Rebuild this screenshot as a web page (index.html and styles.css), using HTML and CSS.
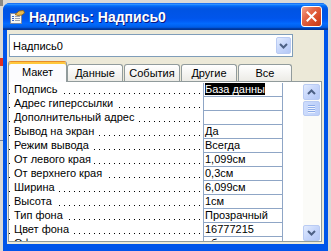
FILE: index.html
```html
<!DOCTYPE html>
<html lang="ru">
<head>
  <meta charset="UTF-8" />
  <title>Надпись: Надпись0</title>
  <link rel="stylesheet" href="styles.css">
</head>
<body>
  <div class="backdrop"></div>
  <div class="window">
    <div class="titlebar">
      <svg class="title-icon" width="16" height="16" viewBox="0 0 16 16">
        <rect x="1.5" y="4.5" width="11" height="10" fill="#f6f6f2" stroke="#7c8aa4"/>
        <rect x="3" y="7" width="2" height="1" fill="#3a66c4"/>
        <rect x="6" y="7" width="5" height="1" fill="#9aa3b4"/>
        <rect x="3" y="9" width="2" height="1" fill="#3a66c4"/>
        <rect x="6" y="9" width="5" height="1" fill="#9aa3b4"/>
        <rect x="3" y="11" width="2" height="1" fill="#3a66c4"/>
        <rect x="6" y="11" width="5" height="1" fill="#9aa3b4"/>
        <path d="M6 5.5 L10 2 L14.5 1.5 L15.5 4 L13 6 L9 6.5 Z" fill="#e9bb4e" stroke="#8a5c12" stroke-width="0.8"/>
      </svg>
      <span class="title">Надпись: Надпись0</span>
      <span class="close">
        <svg width="11" height="11" viewBox="0 0 11 11">
          <path d="M1.5 1.5 L9.5 9.5 M9.5 1.5 L1.5 9.5" stroke="#fff" stroke-width="2" stroke-linecap="square"/>
        </svg>
      </span>
    </div>

    <div class="client">
      <div class="combo">
        <span class="combo-text">Надпись0</span>
        <span class="combo-btn">
          <svg width="9" height="6" viewBox="0 0 9 6"><path d="M1 1 L4.5 4.5 L8 1" fill="none" stroke="#4d6185" stroke-width="2"/></svg>
        </span>
      </div>

      <div class="tabs">
        <div class="tab active">Макет</div>
        <div class="tab">Данные</div>
        <div class="tab">События</div>
        <div class="tab">Другие</div>
        <div class="tab">Все</div>
      </div>

      <div class="panel">
        <div class="grid">
          <div class="row"><div class="label"><span class="name">Подпись</span></div><div class="value"><span class="sel">База данны</span></div></div>
          <div class="row"><div class="label"><span class="name">Адрес гиперссылки</span></div><div class="value"></div></div>
          <div class="row"><div class="label"><span class="name">Дополнительный адрес</span></div><div class="value"></div></div>
          <div class="row"><div class="label"><span class="name">Вывод на экран</span></div><div class="value">Да</div></div>
          <div class="row"><div class="label"><span class="name">Режим вывода</span></div><div class="value">Всегда</div></div>
          <div class="row"><div class="label"><span class="name">От левого края</span></div><div class="value">1,099см</div></div>
          <div class="row"><div class="label"><span class="name">От верхнего края</span></div><div class="value">0,3см</div></div>
          <div class="row"><div class="label"><span class="name">Ширина</span></div><div class="value">6,099см</div></div>
          <div class="row"><div class="label"><span class="name">Высота</span></div><div class="value">1см</div></div>
          <div class="row"><div class="label"><span class="name">Тип фона</span></div><div class="value">Прозрачный</div></div>
          <div class="row"><div class="label"><span class="name">Цвет фона</span></div><div class="value">16777215</div></div>
          <div class="row"><div class="label"><span class="name">Оформление</span></div><div class="value">обычное</div></div>
        </div>
        <div class="scrollbar">
          <div class="sb-btn">
            <svg width="9" height="6" viewBox="0 0 9 6"><path d="M1 5 L4.5 1.5 L8 5" fill="none" stroke="#4d6185" stroke-width="2"/></svg>
          </div>
          <div class="thumb"><span></span><span></span><span></span><span></span></div>
          <div class="sb-btn down">
            <svg width="9" height="6" viewBox="0 0 9 6"><path d="M1 1 L4.5 4.5 L8 1" fill="none" stroke="#4d6185" stroke-width="2"/></svg>
          </div>
        </div>
      </div>
    </div>
  </div>
</body>
</html>
```

FILE: styles.css
```css
body {
  margin: 0;
  background: #d9d9d6;
  font-family: "Liberation Sans", Arial, sans-serif;
  font-size: 11px;
  color: #000;
  display: flex;
  align-items: flex-start;
}

.backdrop {
  width: 3px;
  height: 251px;
  flex-shrink: 0;
  background: linear-gradient(to bottom, #8a8a86 0 6px, #d9d9d6 6px 58px, #e03020 58px 66px, #d9d9d6 66px 140px, #6f7f9c 140px 141px, #d9d9d6 141px);
}

.window {
  margin-top: 3px;
  width: 325px;
  height: 248px;
  flex-shrink: 0;
  background: #0055ea;
  border-radius: 7px 7px 0 0;
  display: flex;
  flex-direction: column;
  overflow: hidden;
}

.titlebar {
  height: 27px;
  flex-shrink: 0;
  display: flex;
  align-items: center;
  padding: 0 6px;
  background: linear-gradient(to bottom, #0058ee 0%, #3593ff 4%, #288eff 6%, #127dff 8%, #036ffc 10%, #0262ee 14%, #0057e5 20%, #0054e3 24%, #0055eb 56%, #005bf5 66%, #026afe 76%, #0062ef 86%, #0052d6 92%, #0040ab 94%, #003092 100%);
}

.title-icon {
  flex-shrink: 0;
}

.title {
  margin-left: 4px;
  color: #fff;
  font-weight: bold;
  font-size: 14px;
  text-shadow: 1px 1px 0 #0a1883;
}

.close {
  margin-left: auto;
  width: 21px;
  height: 21px;
  box-sizing: border-box;
  border: 1px solid #fff;
  border-radius: 3px;
  background: linear-gradient(135deg, #f4a48c 0%, #e4694a 35%, #d84a26 70%, #c23a17 100%);
  display: flex;
  align-items: center;
  justify-content: center;
}

.client {
  flex: 1;
  margin: 0 4px 7px;
  background: #ece9d8;
  display: flex;
  flex-direction: column;
  align-items: flex-start;
}

.combo {
  margin: 4px 0 0 2px;
  width: 284px;
  height: 23px;
  box-sizing: border-box;
  border: 1px solid #7f9db9;
  background: #fff;
  display: flex;
  align-items: center;
}

.combo-text {
  flex: 1;
  padding-left: 3px;
}

.combo-btn,
.sb-btn {
  box-sizing: border-box;
  border: 1px solid #b9cbf3;
  border-radius: 2px;
  background: linear-gradient(135deg, #e2ebfe 0%, #c6d6fb 50%, #b4c8f6 100%);
  display: flex;
  align-items: center;
  justify-content: center;
}

.combo-btn {
  width: 15px;
  height: 17px;
  margin-right: 1px;
}

.tabs {
  display: flex;
  align-items: flex-end;
  height: 20px;
  margin: 4px 0 0 1px;
  position: relative;
  z-index: 1;
}

.tab {
  width: 56px;
  height: 17px;
  margin-right: 1px;
  box-sizing: border-box;
  border: 1px solid #919b9c;
  border-bottom: none;
  border-radius: 3px 3px 0 0;
  background: linear-gradient(#fff, #ecebe6);
  text-align: center;
  line-height: 17px;
}

.tab:last-child {
  width: 54px;
}

.tab.active {
  width: 59px;
  height: 21px;
  margin: 0 0 -1px;
  background: #fcfcfe;
  border-top-color: #e68b2c;
  box-shadow: inset 0 2px 0 #ffc83c;
  line-height: 20px;
}

.panel {
  margin-left: 1px;
  width: 314px;
  height: 161px;
  box-sizing: border-box;
  border: 1px solid #919b9c;
  background: #fff;
  display: flex;
}

.grid {
  flex: 1;
  padding-top: 1px;
  overflow: hidden;
}

.row {
  display: flex;
  height: 14px;
  line-height: 13px;
}

.label {
  width: 194px;
  box-sizing: border-box;
  padding-left: 5px;
  white-space: nowrap;
  background-image: linear-gradient(to right, #000 0 1px, transparent 1px 5px);
  background-size: 5px 1px;
  background-repeat: repeat-x;
  background-position: 0 10px;
}

.name {
  background: #fff;
  padding-right: 3px;
}

.value {
  width: 80px;
  box-sizing: border-box;
  padding-left: 1px;
  border: 1px solid #8fa6c6;
  border-top: none;
  overflow: hidden;
  white-space: nowrap;
}

.sel {
  background: #000;
  color: #fff;
}

.scrollbar {
  width: 17px;
  margin-right: 1px;
  padding-top: 2px;
  display: flex;
  flex-direction: column;
  background: #fbfbf8;
}

.sb-btn {
  height: 16px;
}

.sb-btn.down {
  margin-top: auto;
}

.thumb {
  height: 15px;
  margin-top: 1px;
  box-sizing: border-box;
  border: 1px solid #b9cbf3;
  border-radius: 2px;
  background: linear-gradient(to right, #cddcfc, #bccff9);
  display: flex;
  flex-direction: column;
  align-items: center;
  justify-content: center;
  gap: 1px;
}

.thumb span {
  width: 7px;
  height: 1px;
  background: #8cabe8;
  box-shadow: 0 1px 0 #eef3fe;
}
```
